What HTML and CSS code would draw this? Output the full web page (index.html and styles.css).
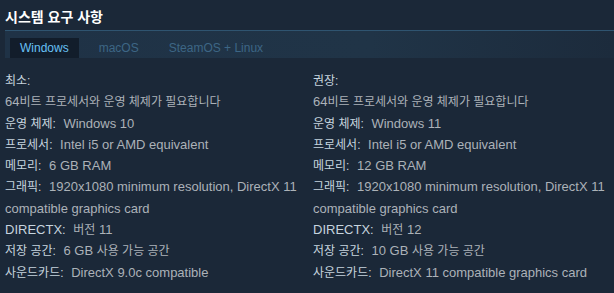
FILE: index.html
```html
<!DOCTYPE html>
<html lang="ko">
<head>
    <meta charset="UTF-8">
    <meta name="viewport" content="width=device-width, initial-scale=1.0">
    <title>시스템 요구 사항</title>
    <link rel="stylesheet" href="styles.css">
</head>
<body>
    <div class="sysreq">
        <h2>시스템 요구 사항</h2>
        <div class="tabs">
            <div class="tab active">Windows</div>
            <div class="tab">macOS</div>
            <div class="tab">SteamOS + Linux</div>
        </div>
        <div class="columns">
            <div class="col">
                <ul>
                    <li><strong class="ko">최소:</strong></li>
                    <li>64<span class="ko">비트 프로세서와 운영 체제가 필요합니다</span></li>
                    <li><strong class="ko">운영 체제:</strong> Windows 10</li>
                    <li><strong class="ko">프로세서:</strong> Intel i5 or AMD equivalent</li>
                    <li><strong class="ko">메모리:</strong> 6 GB RAM</li>
                    <li><strong class="ko">그래픽:</strong> 1920x1080 minimum resolution, DirectX 11 compatible graphics card</li>
                    <li><strong>DirectX:</strong> <span class="ko">버전</span> 11</li>
                    <li><strong class="ko">저장 공간:</strong> 6 GB <span class="ko">사용 가능 공간</span></li>
                    <li><strong class="ko">사운드카드:</strong> DirectX 9.0c compatible</li>
                </ul>
            </div>
            <div class="col">
                <ul>
                    <li><strong class="ko">권장:</strong></li>
                    <li>64<span class="ko">비트 프로세서와 운영 체제가 필요합니다</span></li>
                    <li><strong class="ko">운영 체제:</strong> Windows 11</li>
                    <li><strong class="ko">프로세서:</strong> Intel i5 or AMD equivalent</li>
                    <li><strong class="ko">메모리:</strong> 12 GB RAM</li>
                    <li><strong class="ko">그래픽:</strong> 1920x1080 minimum resolution, DirectX 11 compatible graphics card</li>
                    <li><strong>DirectX:</strong> <span class="ko">버전</span> 12</li>
                    <li><strong class="ko">저장 공간:</strong> 10 GB <span class="ko">사용 가능 공간</span></li>
                    <li><strong class="ko">사운드카드:</strong> DirectX 11 compatible graphics card</li>
                </ul>
            </div>
        </div>
    </div>
</body>
</html>
```

FILE: styles.css
```css
body {
    margin: 0;
    background-color: #1b2838;
    font-family: "Liberation Sans", Arial, "Noto Sans CJK KR", sans-serif;
}

.sysreq {
    padding: 0 0 0 5px;
}

h2 {
    margin: 0;
    padding-top: 8px;
    height: 22px;
    font-size: 14px;
    font-weight: bold;
    color: #ffffff;
    line-height: 18px;
}

.tabs {
    display: flex;
    height: 28px;
    padding: 7px 0 0 5px;
    box-sizing: border-box;
    border-top: 1px solid #2f5470;
    background: linear-gradient(to right, #1f3246 0%, #203447 60%, #1c2b3c 100%);
}

.tab {
    padding: 0 10px;
    font-size: 12px;
    line-height: 20px;
    color: #3d6685;
    margin-right: 10px;
}

.tab.active {
    background-color: #121d2b;
    color: #67c1f5;
}

.columns {
    display: grid;
    grid-template-columns: 308px 1fr;
    padding-top: 12px;
}

.col ul {
    list-style: none;
    margin: 0;
    padding: 0 8px 0 0;
}

.col li {
    font-size: 13px;
    line-height: 21.3px;
    color: #acb2b8;
}

.col strong {
    font-weight: normal;
    color: #c6d4df;
    text-transform: uppercase;
    margin-right: 4px;
}

.ko {
    font-size: 12px;
    line-height: 1;
}
```
